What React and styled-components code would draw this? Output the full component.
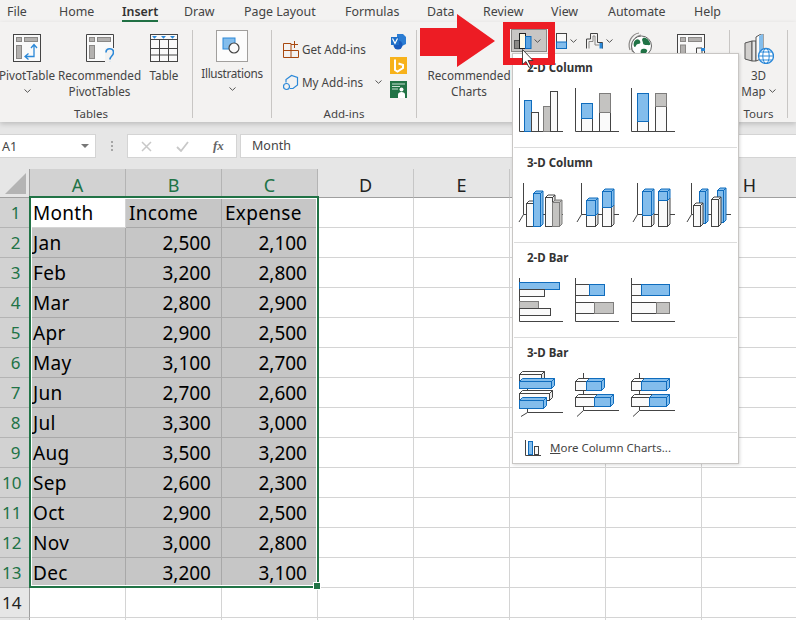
import React from "react";
import styled, { createGlobalStyle } from "styled-components";

const Global = createGlobalStyle`
  html, body { margin: 0; padding: 0; background: #fff; }
  body { font-family: "Noto Sans", "Open Sans", sans-serif; color: #444; }
`;

const Page = styled.div`
  position: relative;
  width: 796px;
  height: 620px;
  overflow: hidden;
  background: #fff;
`;

/* ---------- tabs ---------- */
const TabBar = styled.div`
  display: flex;
  height: 22px;
  padding-left: 7px;
  background: #f3f2f1;
`;
const Tab = styled.div`
  position: relative;
  flex: none;
  width: ${p => p.$w}px;
  font-size: 12.4px;
  line-height: 24px;
  font-weight: ${p => (p.$active ? 600 : 400)};
  color: #444;
  white-space: nowrap;
  ${p => p.$active && `
    color: #333;
    &::after {
      content: "";
      position: absolute;
      left: 0;
      top: 20px;
      width: 36px;
      height: 3px;
      background: #217346;
    }
  `}
`;

/* ---------- ribbon ---------- */
const Ribbon = styled.div`
  position: relative;
  z-index: 2;
  display: flex;
  height: 100px;
  background: #f3f2f1;
  box-shadow: 0 2px 5px rgba(0, 0, 0, 0.18);
`;
const Group = styled.div`
  flex: none;
  width: ${p => p.$w}px;
  height: 100px;
  display: flex;
  flex-direction: column;
`;
const GroupBody = styled.div`
  flex: 1;
  display: flex;
  align-items: flex-start;
  padding-top: ${p => p.$top || 12}px;
  padding-left: ${p => p.$left || 0}px;
`;
const GroupLabel = styled.div`
  height: 16px;
  font-size: 11.5px;
  line-height: 16px;
  text-align: center;
  color: #444;
  padding-right: ${p => p.$shift || 0}px;
`;
const Divider = styled.div`
  flex: none;
  width: 1px;
  margin: 8px 0 4px;
  background: #c8c6c4;
`;
const BigButton = styled.div`
  flex: none;
  width: ${p => p.$w}px;
  display: flex;
  flex-direction: column;
  align-items: center;
`;
const BigIcon = styled.svg`
  display: block;
  flex: none;
  width: 28px;
  height: 28px;
  margin-bottom: ${p => p.$mb ?? 5}px;
`;
const TourIcon = styled.svg`
  display: block;
  width: 30px;
  height: 30px;
  margin-bottom: 3px;
`;
const ButtonText = styled.div`
  font-size: 11.7px;
  line-height: 16px;
  color: #444;
  text-align: center;
  white-space: nowrap;
  letter-spacing: ${p => p.$track || 0}px;
`;
const IllusBox = styled.div`
  width: 30px;
  height: 30px;
  border: 1px solid #a19f9d;
  background: #fcfcfc;
  display: flex;
  align-items: center;
  justify-content: center;
  margin-bottom: 3px;
`;
const ChevronSvg = styled.svg`
  display: block;
  flex: none;
  width: 7px;
  height: 4px;
  margin: ${p => p.$m || "0"};
`;
const AddinColumn = styled.div`
  width: 105px;
  display: flex;
  flex-direction: column;
  gap: 13px;
  padding-top: 9px;
`;
const AddinRow = styled.div`
  display: flex;
  align-items: center;
  height: 20px;
  font-size: 11.7px;
  color: #444;
  white-space: nowrap;
`;
const AddinIcon = styled.svg`
  flex: none;
  width: 17px;
  height: 17px;
  margin-right: 2px;
`;
const AppIcons = styled.div`
  display: flex;
  flex-direction: column;
  gap: 7px;
  margin-left: 2px;
  margin-top: 3px;
`;
const AppIcon = styled.svg`
  display: block;
  width: 17px;
  height: 17px;
`;
const RecCharts = styled.div`
  flex: none;
  width: 84px;
  padding-top: 38px;
`;
const ChartButton = styled.div`
  flex: none;
  width: ${p => p.$w}px;
  height: ${p => p.$h || 23}px;
  margin-top: ${p => p.$mt || 0}px;
  margin-right: ${p => p.$mr || 0}px;
  display: flex;
  align-items: center;
  justify-content: flex-start;
  box-sizing: border-box;
  padding-left: ${p => p.$pl || 0}px;
  ${p => p.$selected && `
    background: #c8c6c4;
    border: 1px solid #8a8886;
  `}
`;
const ChartGlyph = styled.svg`
  display: block;
  flex: none;
  width: ${p => p.$w}px;
  height: ${p => p.$h}px;
  overflow: visible;
`;
const MapLine = styled.div`
  display: flex;
  align-items: center;
  gap: 3px;
`;

/* ---------- formula bar ---------- */
const FormulaBar = styled.div`
  height: 47px;
  background: #e6e6e6;
  display: flex;
  align-items: flex-start;
  padding-top: 12px;
  box-sizing: border-box;
`;
const NameBox = styled.div`
  flex: none;
  width: 96px;
  height: 24px;
  box-sizing: border-box;
  background: #fff;
  border: 1px solid #d4d4d4;
  border-left: 0;
  padding: 0 6px 0 2px;
  display: flex;
  align-items: center;
  justify-content: space-between;
  font-size: 12.5px;
  color: #444;
`;
const Caret = styled.div`
  width: 0;
  height: 0;
  border-left: 4px solid transparent;
  border-right: 4px solid transparent;
  border-top: 4px solid #777;
`;
const Dots = styled.div`
  flex: none;
  width: 31px;
  height: 24px;
  display: flex;
  flex-direction: column;
  align-items: center;
  justify-content: center;
  gap: 2px;
  & > i { display: block; width: 2px; height: 2px; background: #a6a6a6; }
`;
const FxBox = styled.div`
  flex: none;
  width: 110px;
  height: 24px;
  box-sizing: border-box;
  background: #fff;
  border: 1px solid #d4d4d4;
  display: flex;
  align-items: center;
  padding-left: 13px;
  gap: 24px;
  margin-right: 3px;
`;
const FxText = styled.span`
  font-family: "Liberation Serif", serif;
  font-style: italic;
  font-weight: 700;
  font-size: 13px;
  color: #666;
`;
const FormulaInput = styled.div`
  flex: 1;
  height: 24px;
  box-sizing: border-box;
  background: #fff;
  border: 1px solid #d4d4d4;
  border-right: 0;
  padding-left: 11px;
  font-size: 12.5px;
  line-height: 22px;
  color: #444;
`;

/* ---------- sheet ---------- */
const Sheet = styled.div`
  position: relative;
  display: grid;
  grid-template-columns: 30px repeat(8, 96px);
  grid-auto-rows: 30px;
  grid-template-rows: 29px;
`;
const Corner = styled.div`
  background: #e6e6e6;
  border-right: 1px solid #9f9f9f;
  border-bottom: 1px solid #9f9f9f;
  box-sizing: border-box;
  position: relative;
  &::after {
    content: "";
    position: absolute;
    right: 3px;
    bottom: 3px;
    width: 0;
    height: 0;
    border-left: 21px solid transparent;
    border-bottom: 21px solid #b4b4b4;
  }
`;
const ColHead = styled.div`
  box-sizing: border-box;
  background: ${p => (p.$sel ? "#d2d2d2" : "#e6e6e6")};
  border-right: 1px solid ${p => (p.$sel ? "#b4b4b4" : "#c6c6c6")};
  border-bottom: 1px solid #9f9f9f;
  text-align: center;
  font-size: 18px;
  line-height: 32px;
  color: ${p => (p.$sel ? "#217346" : "#222")};
`;
const RowHead = styled.div`
  box-sizing: border-box;
  background: ${p => (p.$sel ? "#d2d2d2" : "#e6e6e6")};
  border-right: 1px solid #9f9f9f;
  border-bottom: 1px solid ${p => (p.$sel ? "#b4b4b4" : "#c6c6c6")};
  padding-left: 2px;
  font-size: 17px;
  line-height: 30px;
  color: ${p => (p.$sel ? "#217346" : "#222")};
  text-align: ${p => (p.$wide ? "left" : "center")};
`;
const Cell = styled.div`
  box-sizing: border-box;
  background: ${p => (p.$sel ? "#c6c6c6" : "#fff")};
  border-right: 1px solid ${p => (p.$sel ? "#a8a8a8" : "#d4d4d4")};
  border-bottom: 1px solid ${p => (p.$sel ? "#a8a8a8" : "#d4d4d4")};
  padding: 0 10px 0 3px;
  font-size: 19px;
  line-height: 31px;
  color: #000;
  letter-spacing: ${p => (p.$num ? 0 : 0.3)}px;
  text-align: ${p => (p.$num ? "right" : "left")};
  white-space: nowrap;
  overflow: hidden;
`;
const Selection = styled.div`
  position: absolute;
  left: 29px;
  top: 27px;
  width: 290px;
  height: 392px;
  box-sizing: border-box;
  border: 2px solid #217346;
  box-shadow: inset 0 0 0 1px #fff;
  pointer-events: none;
`;
const Handle = styled.div`
  position: absolute;
  right: -4px;
  bottom: -4px;
  width: 6px;
  height: 6px;
  background: #217346;
  border: 1px solid #fff;
`;

/* ---------- popup ---------- */
const Popup = styled.div`
  position: absolute;
  z-index: 5;
  left: 512px;
  top: 53px;
  width: 227px;
  height: 411px;
  box-sizing: border-box;
  background: #fff;
  border: 1px solid #c8c6c4;
  box-shadow: 1px 1px 3px rgba(0, 0, 0, 0.15);
`;
const PopSection = styled.div`
  height: 95px;
  box-sizing: border-box;
  margin: 0 1px;
  border-bottom: 1px solid #dcdcdc;
  padding: 7px 0 0 5px;
  &:first-child {
    height: 94px;
    padding-top: 6px;
  }
`;
const PopHeading = styled.div`
  height: 16px;
  line-height: 16px;
  margin: 0 0 12px 8px;
  font-size: 11.5px;
  font-weight: 700;
  color: #333;
`;
const IconRow = styled.div`
  display: flex;
  gap: 12px;
`;
const ChartIcon = styled.svg`
  display: block;
  flex: none;
  width: 44px;
  height: 44px;
  overflow: visible;
`;
const PopFooter = styled.div`
  display: flex;
  align-items: center;
  height: 29px;
  padding-left: 12px;
  font-size: 11.5px;
  color: #444;
`;
const FooterIcon = styled.svg`
  display: block;
  flex: none;
  width: 16px;
  height: 16px;
  margin-right: 9px;
`;
const Mnemonic = styled.span`
  text-decoration: underline;
`;

/* ---------- annotations ---------- */
const RedBox = styled.div`
  position: absolute;
  z-index: 7;
  left: 503px;
  top: 22px;
  width: 52px;
  height: 43px;
  box-sizing: border-box;
  border: 7px solid #ed1c24;
`;
const Overlay = styled.svg`
  position: absolute;
  z-index: ${p => p.$z};
  left: ${p => p.$x}px;
  top: ${p => p.$y}px;
  width: ${p => p.$w}px;
  height: ${p => p.$h}px;
`;

/* ---------- drawings ---------- */
const BLUE = "#83bdec", BLUEL = "#0f6cbd", GR = "#c4c3c1", GRL = "#7d7c7b", WH = "#fafafa", DK = "#444";

const Chevron = ({ m }) => (
  <ChevronSvg viewBox="0 0 7 4" $m={m}>
    <path d="M.5.5 3.500 3.300 6.500.5" fill="none" stroke="#555" strokeWidth="1" />
  </ChevronSvg>
);

const Pivot = ({ q }) => (
  <BigIcon viewBox="0 0 28 28">
    {q ? (
      <path d="M20 27.500H.5V.5h27v14" fill="#fafafa" stroke="#444" />
    ) : (
      <rect x=".5" y=".5" width="27" height="27" fill="#fafafa" stroke="#444" />
    )}
    <rect x="3.500" y="3.500" width="5" height="4" fill="#b3b1af" stroke="#8a8886" />
    <rect x="11.500" y="3.500" width="13" height="4" fill="#b3b1af" stroke="#8a8886" />
    <rect x="3.500" y="11.500" width="5" height="13" fill="#b3b1af" stroke="#8a8886" />
    {q ? (
      <>
        <rect x="19" y="14" width="10" height="14" fill="#f3f2f1" />
        <path d="M20 18.500c0-5 7.500-5 7.500 0 0 3.500-3.500 3.500-3.500 7" fill="none" stroke="#2b88d8" strokeWidth="1.600" />
        <circle cx="24" cy="29" r="1.200" fill="#2b88d8" />
      </>
    ) : (
      <path d="M12.500 22.500H21V11M18 14l3-3.500 3 3.500M15.500 19.500l-3.500 3 3.500 3" fill="none" stroke="#2b88d8" strokeWidth="1.300" />
    )}
  </BigIcon>
);

const TableIcon = () => (
  <BigIcon viewBox="0 0 28 28">
    <rect x=".5" y=".5" width="27" height="27" fill="#fafafa" stroke="#444" />
    <path d="M.5 5.500h27M.5 14.500h27M.5 21h27M9.500 5.500v22M18.500 5.500v22" stroke="#444" fill="none" />
    <path d="M2 2h5L4.500 4.800zM11 2h5l-2.500 2.800zM20 2h5l-2.500 2.800z" fill="#2b88d8" />
  </BigIcon>
);

const Globe = () => (
  <ChartGlyph $w={24} $h={24} viewBox="0 0 24 24">
    <path d="M2 17C-1 9 4 1 11 0" fill="none" stroke="#8a8886" strokeWidth="1.200" />
    <path d="M4.500 19C1.500 11 6 3 13 2" fill="none" stroke="#8a8886" strokeWidth="1" />
    <circle cx="13.500" cy="13" r="10" fill="#fff" stroke="#666" strokeWidth="1" />
    <path d="M6 9c2-4 5-3 6-1s0 3-2 3-2 3-3 3-2-2-1-5zM15 5c3-1 6 2 7 5s-2 2-3 2-4 0-4-2-2-3 0-5zM13 17c2-2 5-1 6 0s-2 5-4 5-3-3-2-5z" fill="#217346" />
  </ChartGlyph>
);

const Bar3D = ({ x, y, w, h, fill, line, d = 3 }) => (
  <g strokeWidth="1" stroke={line}>
    <path d={`M${x} ${y}l${d} ${-d}h${w}l${-d} ${d}z`} fill={fill === WH ? "#fff" : fill} />
    <path d={`M${x + w} ${y}l${d} ${-d}v${h}l${-d} ${d}z`} fill={fill === WH ? "#e8e8e8" : fill} />
    <rect x={x} y={y} width={w} height={h} fill={fill} />
  </g>
);

const R = ({ x, y, w, h, c = "w" }) => {
  const f = c === "b" ? BLUE : c === "g" ? GR : WH;
  const s = c === "b" ? BLUEL : c === "g" ? GRL : DK;
  return <rect x={x + 0.5} y={y + 0.5} width={w} height={h} fill={f} stroke={s} strokeWidth="1" />;
};

const Axis2D = () => <path d="M.5 0V43.500H44" fill="none" stroke="#444" />;
const Axis3D = ({ x = 4, y = 31 }) => <path d={`M${x + 0.5} 0V${y + 0.5}H44M${x + 0.5} ${y + 0.5}L${x - 4} ${y + 8}`} fill="none" stroke="#444" />;

const solid = (x, y, w, h, c, d) => (
  <Bar3D x={x + 0.5} y={y + 0.5} w={w} h={h} d={d}
    fill={c === "b" ? BLUE : c === "g" ? GR : WH}
    line={c === "b" ? BLUEL : c === "g" ? GRL : DK} />
);
const col = (x, y, w, h, c) => solid(x, y, w, h, c, 2.5);
const bar = (x, y, w, h, c) => solid(x, y, w, h, c, 3);

const Chart = ({ children }) => <ChartIcon viewBox="0 0 44 44">{children}</ChartIcon>;

const Column2D = [
  <Chart key="a"><Axis2D /><R x={5} y={12} w={7} h={31} c="b" /><R x={12} y={24} w={7} h={19} /><R x={24} y={18} w={7} h={25} c="g" /><R x={31} y={3} w={7} h={40} /></Chart>,
  <Chart key="b"><Axis2D /><R x={6} y={30} w={11} h={13} /><R x={6} y={15} w={11} h={15} c="b" /><R x={24} y={24} w={11} h={19} /><R x={24} y={5} w={11} h={19} c="g" /></Chart>,
  <Chart key="c"><Axis2D /><R x={6} y={33} w={11} h={10} /><R x={6} y={5} w={11} h={28} c="b" /><R x={24} y={18} w={11} h={25} /><R x={24} y={5} w={11} h={13} c="g" /></Chart>,
];
const Column3D = [
  <Chart key="a"><Axis3D />{col(7, 20, 7, 23)}{col(14, 10, 7, 33, "b")}{col(26, 14, 7, 29)}{col(33, 19, 7, 24, "g")}</Chart>,
  <Chart key="b"><Axis3D x={6} />{col(11, 32, 9, 11)}{col(11, 17, 9, 15, "b")}{col(27, 24, 9, 19)}{col(27, 8, 9, 16, "b")}</Chart>,
  <Chart key="c"><Axis3D x={6} />{col(11, 32, 9, 11)}{col(11, 8, 9, 24, "b")}{col(27, 17, 9, 26)}{col(27, 8, 9, 9, "b")}</Chart>,
  <Chart key="d"><Axis3D />{col(12, 8, 6, 32, "b")}{col(6, 22, 7, 21)}{col(30, 7, 6, 32, "b")}{col(24, 16, 7, 27)}</Chart>,
];
const Bar2DSet = [
  <Chart key="a"><Axis2D /><R x={0} y={4} w={40} h={7} c="b" /><R x={0} y={11} w={25} h={7} /><R x={0} y={23} w={19} h={7} c="g" /><R x={0} y={30} w={31} h={7} /></Chart>,
  <Chart key="b"><Axis2D /><R x={0} y={6} w={14} h={11} /><R x={14} y={6} w={15} h={11} c="b" /><R x={0} y={24} w={19} h={11} /><R x={19} y={24} w={19} h={11} c="g" /></Chart>,
  <Chart key="c"><Axis2D /><R x={0} y={6} w={10} h={11} /><R x={10} y={6} w={28} h={11} c="b" /><R x={0} y={24} w={25} h={11} /><R x={25} y={24} w={13} h={11} c="g" /></Chart>,
];
const AxisBar = () => <path d="M8.500 0V37.500H44M8.500 37.500L2 43.500" fill="none" stroke="#444" />;
const Bar3DSet = [
  <Chart key="a"><path d="M8.500 0V39.500H44M8.500 39.500L2 43.500" fill="none" stroke="#444" />{bar(0, 1, 22, 7)}{bar(0, 8, 32, 7, "b")}{bar(0, 20, 30, 7)}{bar(0, 27, 24, 8, "b")}</Chart>,
  <Chart key="b"><AxisBar />{bar(0, 8, 11, 9)}{bar(11, 8, 15, 9, "b")}{bar(0, 24, 19, 9)}{bar(19, 24, 16, 9, "b")}</Chart>,
  <Chart key="c"><AxisBar />{bar(0, 8, 10, 9)}{bar(10, 8, 25, 9, "b")}{bar(0, 24, 18, 9)}{bar(18, 24, 17, 9, "b")}</Chart>,
];

const tabs = [
  ["File", 52], ["Home", 63], ["Insert", 62, true], ["Draw", 60], ["Page Layout", 101], ["Formulas", 82],
  ["Data", 56], ["Review", 68], ["View", 57], ["Automate", 86], ["Help", 40],
];

const data = [
  ["Jan", "2,500", "2,100"], ["Feb", "3,200", "2,800"], ["Mar", "2,800", "2,900"], ["Apr", "2,900", "2,500"],
  ["May", "3,100", "2,700"], ["Jun", "2,700", "2,600"], ["Jul", "3,300", "3,000"], ["Aug", "3,500", "3,200"],
  ["Sep", "2,600", "2,300"], ["Oct", "2,900", "2,500"], ["Nov", "3,000", "2,800"], ["Dec", "3,200", "3,100"],
];
const EMPTY = [0, 1, 2, 3, 4];
const ALL = [0, 1, 2, 3, 4, 5, 6, 7];

const SheetRow = ({ n, cells }) => (
  <>
    <RowHead $sel $wide={n > 9}>{n}</RowHead>
    {cells.map((c, i) => (
      <Cell key={i} $sel={n !== 1 || i > 0} $num={n > 1 && i > 0}>{c}</Cell>
    ))}
    {EMPTY.map(i => <Cell key={`e${i}`} />)}
  </>
);

export default function App() {
  return (
    <Page>
      <Global />
      <TabBar>
        {tabs.map(([t, w, a]) => <Tab key={t} $w={w} $active={a}>{t}</Tab>)}
      </TabBar>
      <Ribbon>
        <Group $w={192}>
          <GroupBody>
            <BigButton $w={54}>
              <Pivot />
              <ButtonText>PivotTable</ButtonText>
              <Chevron m="6px 0 0" />
            </BigButton>
            <BigButton $w={91}>
              <Pivot q />
              <ButtonText>Recommended</ButtonText>
              <ButtonText>PivotTables</ButtonText>
            </BigButton>
            <BigButton $w={38}>
              <TableIcon />
              <ButtonText>Table</ButtonText>
            </BigButton>
          </GroupBody>
          <GroupLabel $shift={10}>Tables</GroupLabel>
        </Group>
        <Divider />
        <Group $w={78}>
          <GroupBody $top={8}>
            <BigButton $w={78}>
              <IllusBox>
                <svg width="20" height="20" viewBox="0 0 20 20">
                  <rect x="1" y="2" width="12" height="11" fill="#83bdec" stroke="#2b88d8" />
                  <circle cx="12" cy="12" r="5" fill="#fafafa" stroke="#444" strokeWidth="1.200" />
                </svg>
              </IllusBox>
              <ButtonText $track={-0.3}>Illustrations</ButtonText>
              <Chevron m="6px 0 0" />
            </BigButton>
          </GroupBody>
          <GroupLabel />
        </Group>
        <Divider />
        <Group $w={144}>
          <GroupBody $top={8} $left={11}>
            <AddinColumn>
              <AddinRow>
                <AddinIcon viewBox="0 0 17 17">
                  <path d="M.5 2.500h7.500v14H.5zM.5 9.500h15V16.500H8" fill="none" stroke="#a8480f" />
                  <path d="M11.500 0v7M8 3.500h7" fill="none" stroke="#a8480f" />
                </AddinIcon>
                Get Add-ins
              </AddinRow>
              <AddinRow>
                <AddinIcon viewBox="0 0 17 17">
                  <path d="M3 8.500V5.500L8.500 1.500 14.500 3.500V11L10 14.500H7" fill="none" stroke="#2b88d8" strokeWidth="1.200" />
                  <circle cx="3.500" cy="12.500" r="3" fill="none" stroke="#2b88d8" strokeWidth="1.200" />
                </AddinIcon>
                My Add-ins
                <Chevron m="0 0 0 12px" />
              </AddinRow>
            </AddinColumn>
            <AppIcons>
              <AppIcon viewBox="0 0 17 17">
                <path d="M7 1h6l3 3v7l-4 2H7z" fill="#2b7cd3" />
                <circle cx="8" cy="12" r="4.500" fill="#185abd" />
                <rect x="1" y="4" width="8" height="8" fill="#1e6fc9" />
                <path d="M2.500 5.500 5 10.500 7.500 5.500" fill="none" stroke="#fff" strokeWidth="1.200" />
              </AppIcon>
              <AppIcon viewBox="0 0 17 17">
                <rect width="17" height="17" fill="#f7b21b" />
                <path d="M5 2.500v10.500l2.500 1.500 5.500-3.500V8L8.500 6.500" fill="none" stroke="#fff" strokeWidth="2" />
              </AppIcon>
              <AppIcon viewBox="0 0 17 17">
                <rect width="17" height="17" fill="#217346" />
                <path d="M2 3h13M2 5.500h8M2 8h6" stroke="#c8dfd2" strokeWidth="1.200" />
                <circle cx="11.500" cy="8.500" r="2" fill="#fff" />
                <path d="M8 17v-3.500c0-1.500 1.500-2.500 3.500-2.500s3.500 1 3.500 2.500V17z" fill="#fff" />
              </AppIcon>
            </AppIcons>
          </GroupBody>
          <GroupLabel>Add-ins</GroupLabel>
        </Group>
        <Divider />
        <Group $w={312}>
          <GroupBody $top={7} $left={10}>
            <RecCharts>
              <ButtonText>Recommended</ButtonText>
              <ButtonText>Charts</ButtonText>
            </RecCharts>
            <ChartButton $w={36} $mr={9} $selected $pl={2}>
              <ChartGlyph $w={18} $h={16} viewBox="0 0 18 16">
                <rect x=".5" y="7.500" width="5" height="8" fill="#8a8886" stroke="#555" />
                <rect x="5.500" y=".5" width="6" height="15" fill="#fffbe6" stroke="#222" />
                <rect x="11.500" y="3.500" width="5.500" height="12" fill="#5ba4e0" stroke="#0f6cbd" />
              </ChartGlyph>
              <Chevron m="0 0 0 2px" />
            </ChartButton>
            <ChartButton $w={30}>
              <ChartGlyph $w={11} $h={16} viewBox="0 0 11 16">
                <rect x=".5" y=".5" width="10" height="15" fill="#fafafa" stroke="#444" />
                <rect x=".5" y="9" width="10" height="6.500" fill="#83bdec" stroke="#0f6cbd" />
              </ChartGlyph>
              <Chevron m="0 0 0 3px" />
            </ChartButton>
            <ChartButton $w={42}>
              <ChartGlyph $w={17} $h={16} viewBox="0 0 17 16">
                <path d="M.5 15.500V6H4.500V.5H11.500V9.500H16.500V15.500" fill="none" stroke="#444" />
                <path d="M3 15.500V8.500H7V3H9V12H13.500" fill="none" stroke="#8a8886" />
                <rect x="13.500" y="10" width="3" height="5.500" fill="#2b88d8" />
              </ChartGlyph>
              <Chevron m="0 0 0 3px" />
            </ChartButton>
            <ChartButton $w={49} $h={24} $mt={4}>
              <Globe />
            </ChartButton>
            <ChartButton $w={30} $h={28} $mt={5}>
              <BigIcon viewBox="0 0 28 28" $mb={0}>
                <rect x=".5" y=".5" width="27" height="27" fill="#fafafa" stroke="#444" />
                <rect x="3.500" y="3.500" width="5" height="4" fill="#b3b1af" stroke="#8a8886" />
                <rect x="11.500" y="3.500" width="13" height="4" fill="#b3b1af" stroke="#8a8886" />
                <rect x="3.500" y="11" width="5" height="14" fill="#b3b1af" stroke="#8a8886" />
                <path d="M19.500 24V14H25V20" fill="#fafafa" stroke="#444" />
                <rect x="24" y="14" width="4" height="3" fill="#2b88d8" />
              </BigIcon>
            </ChartButton>
          </GroupBody>
        </Group>
        <Divider />
        <Group $w={57}>
          <GroupBody $top={12}>
            <BigButton $w={57}>
              <TourIcon viewBox="0 0 30 30">
                <path d="M1 9l7-2v20l-7-2z" fill="#d2d0ce" stroke="#555" />
                <path d="M8 7h4v20H8z" fill="#e6e6e6" stroke="#555" />
                <path d="M12 27V3l5-3h2v24z" fill="#fafafa" stroke="#555" />
                <path d="M15 27V2l4-2v24z" fill="#83bdec" />
                <circle cx="22" cy="22" r="7.500" fill="#fff" stroke="#2b88d8" strokeWidth="1.300" />
                <ellipse cx="22" cy="22" rx="3.200" ry="7.500" fill="none" stroke="#2b88d8" />
                <path d="M14.500 22h15M16 18h12M16 26h12" stroke="#2b88d8" />
              </TourIcon>
              <ButtonText>3D</ButtonText>
              <MapLine>
                <ButtonText>Map</ButtonText>
                <Chevron />
              </MapLine>
            </BigButton>
          </GroupBody>
          <GroupLabel>Tours</GroupLabel>
        </Group>
        <Divider />
      </Ribbon>
      <FormulaBar>
        <NameBox>A1<Caret /></NameBox>
        <Dots><i /><i /><i /></Dots>
        <FxBox>
          <svg width="11" height="11" viewBox="0 0 11 11"><path d="M1 1l9 9M10 1l-9 9" stroke="#c8c8c8" strokeWidth="1.500" /></svg>
          <svg width="13" height="11" viewBox="0 0 13 11"><path d="M1 6l4 4 7-9" fill="none" stroke="#c8c8c8" strokeWidth="1.800" /></svg>
          <FxText>fx</FxText>
        </FxBox>
        <FormulaInput>Month</FormulaInput>
      </FormulaBar>
      <Sheet>
        <Corner />
        {["A", "B", "C", "D", "E", "F", "G", "H"].map((c, i) => (
          <ColHead key={c} $sel={i < 3}>{c}</ColHead>
        ))}
        <SheetRow n={1} cells={["Month", "Income", "Expense"]} />
        {data.map((r, i) => <SheetRow key={r[0]} n={i + 2} cells={r} />)}
        <RowHead $wide>14</RowHead>
        {ALL.map(i => <Cell key={`x${i}`} />)}
        <RowHead />
        {ALL.map(i => <Cell key={`y${i}`} />)}
        <Selection><Handle /></Selection>
      </Sheet>
      <Popup>
        <PopSection>
          <PopHeading>2-D Column</PopHeading>
          <IconRow>{Column2D}</IconRow>
        </PopSection>
        <PopSection>
          <PopHeading>3-D Column</PopHeading>
          <IconRow>{Column3D}</IconRow>
        </PopSection>
        <PopSection>
          <PopHeading>2-D Bar</PopHeading>
          <IconRow>{Bar2DSet}</IconRow>
        </PopSection>
        <PopSection>
          <PopHeading>3-D Bar</PopHeading>
          <IconRow>{Bar3DSet}</IconRow>
        </PopSection>
        <PopFooter>
          <FooterIcon viewBox="0 0 16 16">
            <path d="M.5 0v15.500H16" fill="none" stroke="#444" />
            <rect x="3.500" y="1.500" width="4" height="13" fill="#83bdec" stroke="#0f6cbd" />
            <rect x="9.500" y="6.500" width="4" height="8" fill="#fafafa" stroke="#444" />
          </FooterIcon>
          <span><Mnemonic>M</Mnemonic>ore Column Charts...</span>
        </PopFooter>
      </Popup>
      <Overlay $z={6} $x={420} $y={14} $w={76} $h={54} viewBox="0 0 76 54">
        <path d="M0 14H37V0L75 27 37 53V42H0z" fill="#ed1c24" />
      </Overlay>
      <RedBox />
      <Overlay $z={8} $x={521} $y={48} $w={14} $h={20} viewBox="0 0 14 20">
        <path d="M1.500 1.500v15l3.500-3 3 6 2-1-3-6h5z" fill="#fff" stroke="#333" strokeWidth=".9" />
      </Overlay>
    </Page>
  );
}
